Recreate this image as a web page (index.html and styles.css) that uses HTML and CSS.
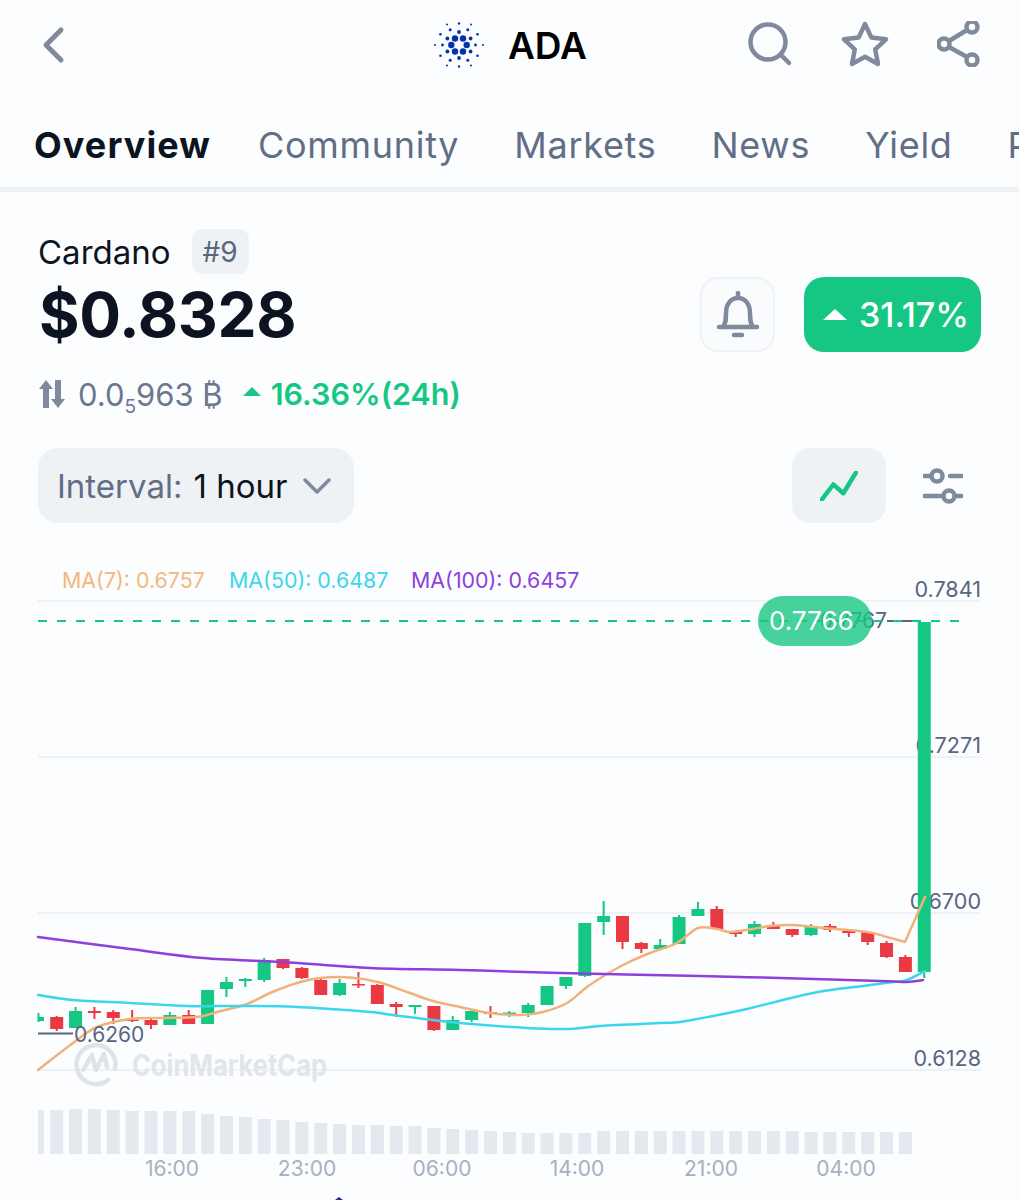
FILE: index.html
```html
<!DOCTYPE html>
<html lang="en">

<head>
    <meta charset="UTF-8">
    <meta name="viewport" content="width=device-width, initial-scale=1.0">
    <title>ADA</title>
    <link rel="stylesheet" href="styles.css">
</head>

<body>
    <header class="top-bar">
        <svg class="back-icon" width="24" height="40" viewBox="0 0 24 40">
            <path d="M20 5 5 20l15 15" />
        </svg>
        <div class="coin-title">
            <svg class="ada-logo" width="50" height="46" viewBox="-25 -23 50 46">
                <g id="adaDots"></g>
            </svg>
            <span>ADA</span>
        </div>
        <div class="top-actions">
            <svg class="line-icon search-icon" width="46" height="46" viewBox="0 0 46 46">
                <circle cx="21" cy="21" r="17.5" />
                <path d="M34 34l8 8" />
            </svg>
            <svg class="line-icon star-icon" width="48" height="48" viewBox="0 0 48 48">
                <path d="M24 4l6.3 13.4 14.7 1.9-10.8 10.1 2.8 14.6L24 36.8 11 44l2.8-14.6L3 19.3l14.7-1.9z" />
            </svg>
            <svg class="line-icon share-icon" width="46" height="46" viewBox="0 0 46 46">
                <circle cx="35" cy="6" r="5.5" />
                <circle cx="7" cy="23" r="5.5" />
                <circle cx="35" cy="39" r="5.5" />
                <path d="M30 9 12 20M12 26l18 10" />
            </svg>
        </div>
    </header>

    <nav class="tabs">
        <a class="tab active">Overview</a>
        <a class="tab">Community</a>
        <a class="tab">Markets</a>
        <a class="tab">News</a>
        <a class="tab">Yield</a>
        <a class="tab">Projects</a>
    </nav>

    <section class="summary">
        <div class="name-row">
            <span class="coin-name">Cardano</span>
            <span class="rank">#9</span>
        </div>
        <div class="price-row">
            <div class="price">$0.8328</div>
            <div class="price-actions">
                <button class="bell-btn">
                    <svg class="line-icon bell-icon" width="44" height="48" viewBox="0 0 44 48">
                        <path d="M22 2v5M3 36h38M7 36c3-4 3-8 3-14 0-9 5-15 12-15s12 6 12 15c0 6 0 10 3 14" />
                        <path d="M18 44h8" />
                    </svg>
                </button>
                <div class="change-badge">
                    <span class="caret caret-white"></span>
                    <span>31.17%</span>
                </div>
            </div>
        </div>
        <div class="sub-row">
            <svg class="swap-icon" width="28" height="28" viewBox="0 0 28 28">
                <path d="M8 0 15 9H11V28H5V9H1zM20 28 13 19H17V0H23V19H27z" />
            </svg>
            <span class="btc-price">0.0<sub>5</sub>963 ₿</span>
            <span class="caret caret-green"></span>
            <span class="day-change">16.36%(24h)</span>
        </div>
        <div class="controls">
            <div class="interval">
                <span class="interval-label">Interval:</span>
                <span class="interval-value">1 hour</span>
                <svg class="chevron" width="28" height="16" viewBox="0 0 28 16">
                    <path d="M2 2l12 12L26 2" />
                </svg>
            </div>
            <div class="chart-tools">
                <button class="type-btn">
                    <svg width="38" height="30" viewBox="0 0 38 30">
                        <path d="M1.700 28.800 13.300 13.500l10 8.700L36 1.500" />
                    </svg>
                </button>
                <svg class="line-icon filter-icon" width="40" height="36" viewBox="0 0 40 36">
                    <circle cx="14" cy="8" r="5.5" />
                    <circle cx="26" cy="28" r="5.5" />
                    <path d="M1 8h7M27 8h12M1 28h19M33 28h6" />
                </svg>
            </div>
        </div>
    </section>

    <svg id="chart" class="chart" width="1019" height="640" viewBox="0 560 1019 640">
        <g class="grid">
            <path d="M38 601H981M38 757H981M38 913H981M38 1070H981" />
        </g>
        <g class="legend">
            <text class="ma7-text" x="62" y="588">MA(7): 0.6757</text>
            <text class="ma50-text" x="229" y="588">MA(50): 0.6487</text>
            <text class="ma100-text" x="411" y="588">MA(100): 0.6457</text>
        </g>
        <g class="y-labels">
            <text x="981" y="597">0.7841</text>
            <text x="981" y="753">0.7271</text>
            <text x="981" y="909">0.6700</text>
            <text x="981" y="1066">0.6128</text>
        </g>
        <g id="volume" class="volume"></g>
        <g class="watermark">
            <path class="mark-ring" d="M115 1069a19.500 19.500 0 1 0-7 11" />
            <path class="mark-m" d="M83 1070l9-15 4 15 8-16 3 13" />
            <text x="132" y="1076" textLength="195" lengthAdjust="spacingAndGlyphs">CoinMarketCap</text>
        </g>
        <g id="candles"></g>
        <path id="ma7" class="ma ma7" />
        <path id="ma50" class="ma ma50" />
        <path id="ma100" class="ma ma100" />
        <path class="low-mark" d="M38 1033.500H73" />
        <text class="low-label" x="74" y="1042">0.6260</text>
        <path class="high-mark" d="M887 621H920" />
        <text class="high-label" x="887" y="628">0.7767</text>
        <path class="last-line" d="M38 621H960" />
        <rect class="last-pill" x="758" y="596" width="114" height="50" rx="25" />
        <text class="last-text" x="769" y="630">0.7766</text>
        <g class="x-labels">
            <text x="172" y="1176">16:00</text>
            <text x="307" y="1176">23:00</text>
            <text x="442" y="1176">06:00</text>
            <text x="577" y="1176">14:00</text>
            <text x="711" y="1176">21:00</text>
            <text x="846" y="1176">04:00</text>
        </g>
        <path class="nav-tip" d="M339 1197l-4 3h8z" />
    </svg>

    <script src="script.js"></script>
</body>

</html>
```

FILE: styles.css
```css
* {
    box-sizing: border-box;
}

html,
body {
    height: 1200px;
}

body {
    margin: 0;
    overflow: hidden;
    background: #fcfdfe;
    color: #0d1421;
    font-family: Inter, "Liberation Sans", sans-serif;
}

button {
    border: none;
    padding: 0;
    display: flex;
    align-items: center;
    justify-content: center;
}

.line-icon {
    fill: none;
    stroke: #808a9d;
    stroke-width: 4.5;
    stroke-linecap: round;
    stroke-linejoin: round;
}

/* top bar */
.top-bar {
    height: 90px;
    padding: 0 36px 0 41px;
    display: grid;
    grid-template-columns: 1fr auto 1fr;
    align-items: center;
}

.back-icon {
    fill: none;
    stroke: #808a9d;
    stroke-width: 5;
    stroke-linecap: round;
    stroke-linejoin: round;
    margin-top: -1px;
}

.coin-title {
    display: flex;
    align-items: center;
    gap: 24px;
    margin-left: -3px;
    font-size: 37px;
    font-weight: 600;
    color: #000;
}

.ada-logo circle {
    fill: #0033ad;
}

.top-actions {
    display: flex;
    justify-content: flex-end;
    align-items: center;
    gap: 48px;
    margin-top: -2px;
}

/* tabs */
.tabs {
    height: 102px;
    padding: 33px 0 0 34px;
    display: flex;
    gap: 55px;
    border-bottom: 5px solid #eff2f5;
    white-space: nowrap;
    overflow: hidden;
}

.tab {
    position: relative;
    font-size: 36px;
    line-height: 44px;
    letter-spacing: 0.7px;
    color: #616e85;
}

.tab.active {
    margin-right: -8px;
    font-weight: 700;
    letter-spacing: 1.1px;
    color: #0d1421;
}

.tab.active::after {
    content: "";
    position: absolute;
    left: 4px;
    right: 4px;
    top: 64px;
    height: 4px;
    border-radius: 2px;
    background: #3861fb;
}

/* price summary */
.summary {
    padding: 37px 38px 0;
}

.name-row {
    height: 45px;
    display: flex;
    align-items: center;
    gap: 21px;
}

.coin-name {
    font-size: 33px;
}

.rank {
    width: 57px;
    height: 45px;
    display: flex;
    align-items: center;
    justify-content: center;
    border-radius: 10px;
    background: #eff2f5;
    color: #58667e;
    font-size: 28px;
}

.price-row {
    height: 75px;
    margin-top: 3px;
    display: flex;
    align-items: center;
    justify-content: space-between;
}

.price {
    font-size: 62px;
    font-weight: 700;
    letter-spacing: -0.3px;
    margin-left: 1px;
}

.price-actions {
    display: flex;
    align-items: center;
    gap: 29px;
}

.bell-btn {
    width: 75px;
    height: 75px;
    border: 2px solid #eff2f5;
    border-radius: 18px;
    background: #fafbfd;
}

.change-badge {
    width: 177px;
    height: 75px;
    padding-left: 19px;
    display: flex;
    align-items: center;
    gap: 12px;
    border-radius: 20px;
    background: #16c784;
    color: #fff;
    font-size: 34px;
    font-weight: 500;
}

.caret {
    width: 0;
    height: 0;
    border-style: solid;
    border-color: transparent;
    border-top-width: 0;
}

.caret-white {
    border-width: 0 12px 11px;
    border-bottom-color: #fff;
}

.caret-green {
    border-width: 0 9px 9px;
    border-bottom-color: #16c784;
    margin: 0 10px 5px 20px;
}

.sub-row {
    height: 38px;
    margin-top: 23px;
    display: flex;
    align-items: center;
}

.swap-icon {
    fill: #808a9d;
    margin-right: 12px;
}

.btc-price {
    font-size: 31px;
    color: #6b778e;
}

.btc-price sub {
    font-size: 19px;
    line-height: 0;
}

.day-change {
    font-size: 30.5px;
    font-weight: 600;
    margin-top: -1px;
    color: #16c784;
}

.controls {
    height: 75px;
    margin-top: 35px;
    display: flex;
    justify-content: space-between;
}

.interval {
    width: 316px;
    padding-left: 19px;
    display: flex;
    align-items: center;
    gap: 11px;
    border-radius: 20px;
    background: #eff2f5;
    font-size: 33px;
}

.interval-label {
    color: #616e85;
}

.chevron {
    fill: none;
    stroke: #808a9d;
    stroke-width: 3.5;
    stroke-linecap: round;
    stroke-linejoin: round;
    margin-left: 5px;
}

.chart-tools {
    display: flex;
    align-items: center;
    gap: 37px;
    padding-right: 18px;
}

.type-btn {
    width: 94px;
    height: 75px;
    border-radius: 18px;
    background: #eff2f5;
}

.type-btn svg {
    fill: none;
    stroke: #16c784;
    stroke-width: 4.5;
    stroke-linecap: round;
    stroke-linejoin: round;
}

/* chart */
.chart {
    display: block;
    margin-top: 37px;
    font-family: Inter, "Liberation Sans", sans-serif;
}

.grid path {
    fill: none;
    stroke: #eff2f5;
    stroke-width: 2;
}

.legend text {
    font-size: 21.4px;
}

.ma7-text {
    fill: #f4b77a;
}

.ma50-text {
    fill: #3bd6ec;
}

.ma100-text {
    fill: #8e3fdc;
}

.y-labels text {
    text-anchor: end;
    font-size: 21.6px;
    fill: #58667e;
}

.volume rect {
    fill: #e4e8ef;
}

.watermark text {
    font-size: 30px;
    font-weight: 700;
    fill: #e2e5eb;
}

.mark-ring,
.mark-m {
    fill: none;
    stroke: #dfe2e8;
    stroke-width: 4.5;
    stroke-linecap: round;
    stroke-linejoin: round;
}

.up {
    fill: #16c784;
}

.down {
    fill: #ea3943;
}

.ma {
    fill: none;
    stroke-width: 2.5;
    stroke-linecap: round;
    stroke-linejoin: round;
}

.ma7 {
    stroke: #f0b27a;
}

.ma50 {
    stroke: #3bd6ec;
}

.ma100 {
    stroke: #8e3fdc;
}

.low-mark,
.high-mark {
    fill: none;
    stroke: #58667e;
    stroke-width: 2;
}

.low-label,
.high-label {
    font-size: 21px;
    fill: #58667e;
}

.high-label {
    text-anchor: end;
}

.last-line {
    fill: none;
    stroke: #16c784;
    stroke-width: 2;
    stroke-dasharray: 9 10;
}

.last-pill {
    fill: #16c784;
    opacity: 0.8;
}

.last-text {
    font-size: 26px;
    fill: #fff;
}

.x-labels text {
    text-anchor: middle;
    font-size: 21px;
    fill: #a6b0c3;
}

.nav-tip {
    fill: #1d2a9e;
}
```

FILE: script.js
```js
const NS = 'http://www.w3.org/2000/svg';

function add(parent, tag, attrs) {
    let el = document.createElementNS(NS, tag);
    for (let k in attrs) el.setAttribute(k, attrs[k]);
    parent.appendChild(el);
    return el;
}

// ada logo: [x, y, r] for one quarter, mirrored below
let dots = [
    [4, 6.5, 3.2], [7.7, 0, 3.2],
    [0, 13, 1.9], [11.6, 6.5, 1.9], [16.5, 0, 1.4],
    [8.8, 15.3, 1.5], [18.5, 10.7, 1.3],
    [0, 21.5, 1.2], [12, 20.5, 1], [24, 0, 1]
];
let adaDots = document.querySelector('#adaDots');
dots.forEach(([x, y, r]) => {
    let seen = {};
    [[x, y], [-x, y], [x, -y], [-x, -y]].forEach(([cx, cy]) => {
        if (seen[cx + ',' + cy]) return;
        seen[cx + ',' + cy] = true;
        add(adaDots, 'circle', { cx, cy, r });
    });
});

// candles: [dir, bodyTop, bodyBottom, wickTop, wickBottom]
let candleData = [
    ['d', 1017, 1029, 1016, 1031], ['u', 1011, 1028, 1007, 1028], ['d', 1011, 1013, 1007, 1019],
    ['d', 1012, 1018, 1010, 1024], ['d', 1019.5, 1021, 1010, 1022], ['d', 1020, 1025, 1017, 1029],
    ['u', 1015, 1025, 1012, 1025], ['d', 1015, 1024, 1010, 1024], ['u', 990, 1024, 990, 1024],
    ['u', 982, 989, 977, 997], ['u', 979, 981, 978, 987], ['u', 960, 980, 958, 982],
    ['d', 959, 968, 959, 969], ['d', 968, 978, 967, 979], ['d', 980, 995, 978, 995],
    ['u', 983, 995, 979, 996], ['d', 984, 985.500, 972, 988], ['d', 985, 1004, 984, 1004],
    ['d', 1004, 1007, 1002, 1017], ['u', 1005, 1007, 1005, 1014], ['d', 1006, 1030, 1006, 1031],
    ['u', 1020, 1030, 1016, 1030], ['u', 1011, 1020, 1011, 1022], ['d', 1012, 1014, 1006, 1018],
    ['u', 1012.500, 1014, 1011, 1017], ['u', 1005, 1013, 1003, 1017], ['u', 986, 1005, 986, 1005],
    ['u', 977, 986, 977, 989], ['u', 923, 976, 923, 977], ['u', 916, 922, 901, 935],
    ['d', 916, 942, 916, 949], ['d', 943, 949, 942, 953], ['u', 945, 949, 939, 949],
    ['u', 917, 944, 915, 944], ['u', 909, 916, 902, 916], ['d', 909, 929, 906, 929],
    ['d', 932, 934, 931, 937], ['u', 924, 934, 921, 937], ['d', 925, 929, 922, 929],
    ['d', 929, 935, 929, 937], ['u', 926, 935, 924, 936], ['d', 926, 930, 924, 932],
    ['d', 931, 933, 929, 937], ['d', 932, 942, 932, 945], ['d', 943, 957, 941, 958],
    ['d', 957, 972, 955, 972], ['u', 622, 972, 622, 978]
];

let volumeTops = [
    1110, 1109, 1109, 1110, 1111, 1111, 1111, 1111, 1114, 1116, 1117, 1119, 1120, 1122, 1123, 1124,
    1125, 1125, 1126, 1126, 1128, 1129, 1130, 1131, 1132, 1133, 1133, 1133, 1133, 1131, 1131, 1131,
    1131, 1131, 1131, 1131, 1131, 1131, 1131, 1131, 1132, 1132, 1132, 1132, 1132, 1132
];

const FIRST_X = 56.7;
const STEP = 18.86;
const BODY = 13;
let candles = document.querySelector('#candles');
let volume = document.querySelector('#volume');

function drawCandle(cx, dir, top, bottom, wickTop, wickBottom, left, width) {
    let cls = dir === 'u' ? 'up' : 'down';
    add(candles, 'rect', { class: cls, x: cx - 1, y: wickTop, width: 2, height: wickBottom - wickTop });
    add(candles, 'rect', { class: cls, x: left, y: top, width, height: bottom - top });
}

// cut off candle at the left edge
drawCandle(38.5, 'u', 1017, 1021, 1013, 1022, 38, 6);
add(volume, 'rect', { x: 38, y: 1110, width: 6, height: 44 });

candleData.forEach((c, i) => {
    let cx = FIRST_X + STEP * i;
    drawCandle(cx, c[0], c[1], c[2], c[3], c[4], cx - BODY / 2, BODY);
    if (i < volumeTops.length) {
        add(volume, 'rect', { x: cx - BODY / 2, y: volumeTops[i], width: BODY, height: 1154 - volumeTops[i] });
    }
});

// catmull-rom through the points, so the averages don't look angular
function smooth(pts) {
    let d = 'M' + pts[0][0] + ' ' + pts[0][1];
    for (let i = 0; i < pts.length - 1; i++) {
        let p0 = pts[i - 1] || pts[i];
        let p1 = pts[i];
        let p2 = pts[i + 1];
        let p3 = pts[i + 2] || p2;
        let c1x = p1[0] + (p2[0] - p0[0]) / 6;
        let c1y = p1[1] + (p2[1] - p0[1]) / 6;
        let c2x = p2[0] - (p3[0] - p1[0]) / 6;
        let c2y = p2[1] - (p3[1] - p1[1]) / 6;
        d += ' C' + c1x + ' ' + c1y + ' ' + c2x + ' ' + c2y + ' ' + p2[0] + ' ' + p2[1];
    }
    return d;
}

let ma7 = [
    [38, 1070], [73, 1043], [97, 1027], [130, 1019], [163, 1018], [197, 1017], [217, 1012], [247, 1004],
    [270, 993], [297, 983], [320, 978], [350, 977.5], [378, 982], [407, 992], [433, 1001], [460, 1007],
    [490, 1013], [520, 1015], [543, 1012], [567, 1003], [587, 987], [607, 974], [627, 963], [650, 953],
    [677, 943], [698, 928], [717, 929], [730, 932], [753, 929], [770, 926], [793, 925], [823, 928],
    [867, 932], [887, 937], [905, 942]
];
let ma50 = [
    [38, 995], [73, 1000], [130, 1003], [187, 1006], [243, 1006], [297, 1007], [370, 1012], [393, 1015],
    [460, 1023], [527, 1028], [567, 1029], [600, 1026], [660, 1023], [680, 1022], [713, 1016], [747, 1009],
    [813, 993], [863, 986], [893, 982], [907, 980], [925, 971]
];
let ma100 = [
    [38, 937], [130, 949], [203, 958], [283, 962], [370, 968], [460, 970], [560, 973], [700, 976],
    [780, 978], [880, 981], [907, 982], [923, 980]
];
// last step of ma7 is a hard corner
document.querySelector('#ma7').setAttribute('d', smooth(ma7) + ' L925 897');
document.querySelector('#ma50').setAttribute('d', smooth(ma50));
document.querySelector('#ma100').setAttribute('d', smooth(ma100));
```
